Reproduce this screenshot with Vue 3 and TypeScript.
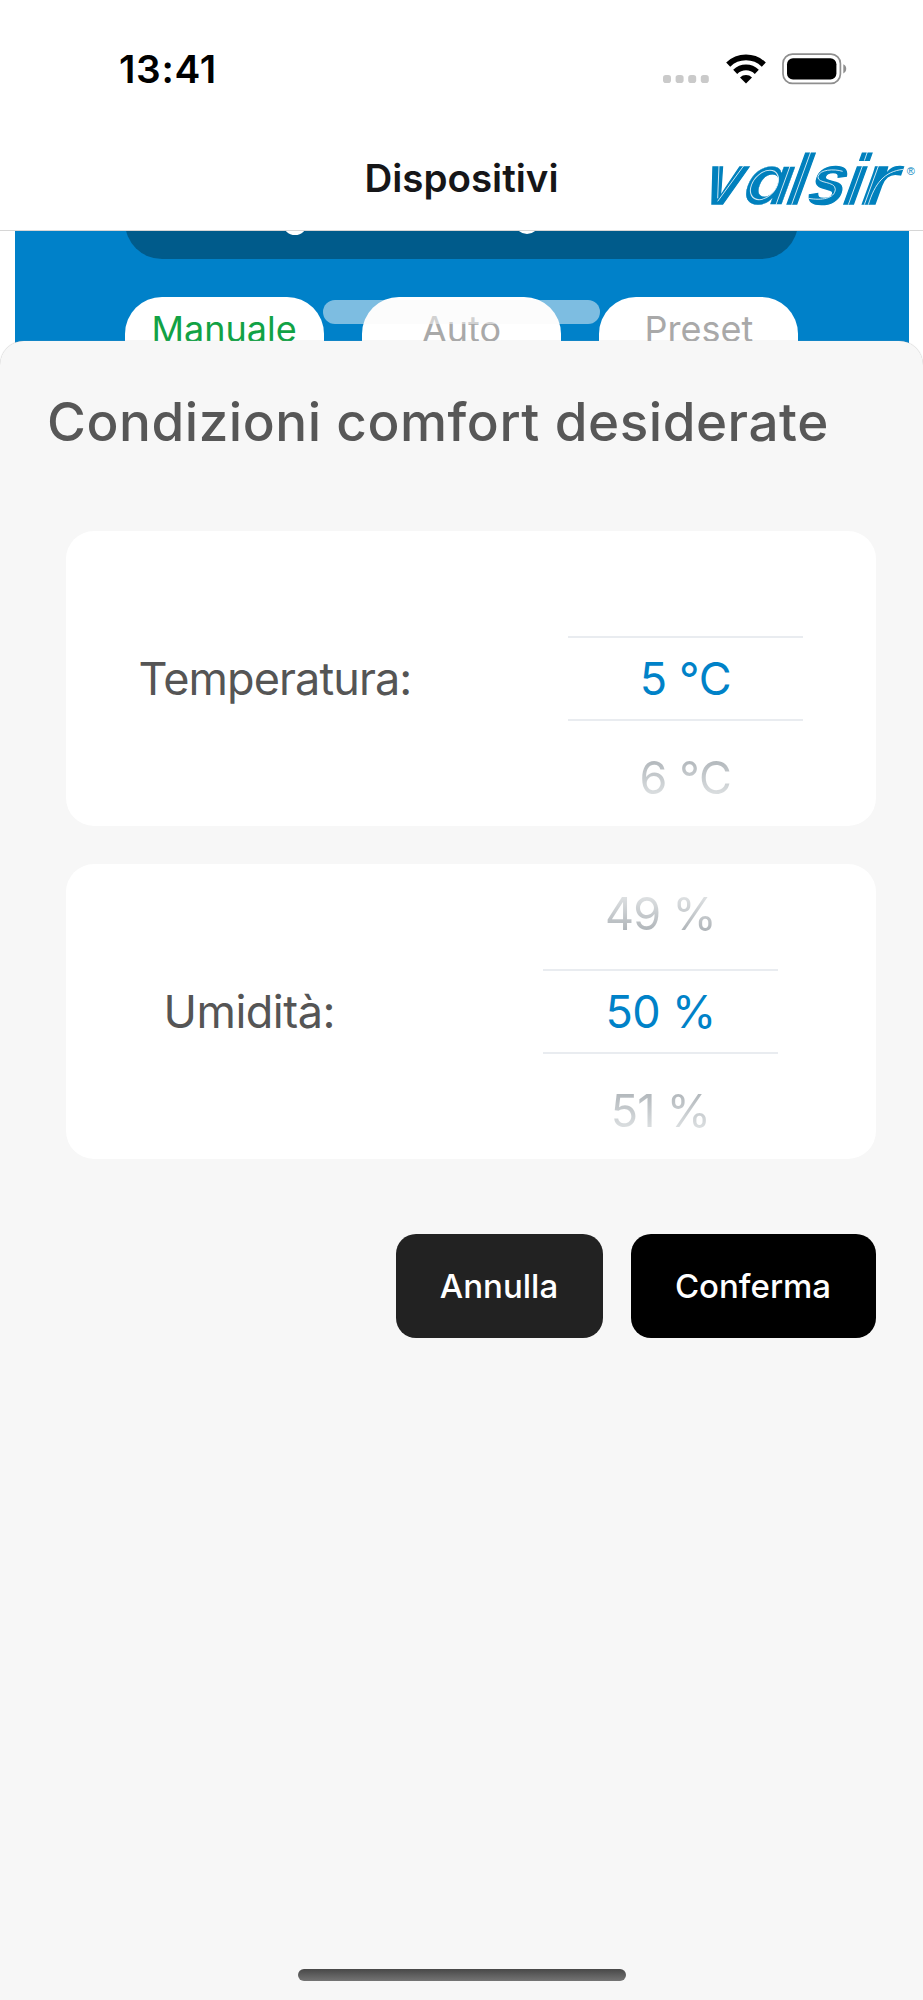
<script setup lang="ts">
interface Wheel {
  id: string
  label: string
  rows: [string, string, string]
}

const wheels: Wheel[] = [
  { id: 'temperature', label: 'Temperatura:', rows: ['', '5 °C', '6 °C'] },
  { id: 'humidity', label: 'Umidità:', rows: ['49 %', '50 %', '51 %'] },
]

const modes = [
  { id: 'manual', label: 'Manuale', active: true },
  { id: 'auto', label: 'Auto', active: false },
  { id: 'preset', label: 'Preset', active: false },
]
</script>

<template>
  <div class="screen">
    <header class="top">
      <div class="status">
        <span class="clock">13:41</span>
        <div class="indicators">
          <svg class="dots" width="46" height="8" viewBox="0 0 46 8">
            <rect v-for="n in 4" :key="n" :x="(n - 1) * 12.6" width="8" height="8" rx="2.8" fill="#cacaca" />
          </svg>
          <svg class="wifi" width="40" height="30" viewBox="0 0 40 30">
            <g fill="none" stroke="#000" stroke-width="5.8">
              <path d="M2.2 10.6A25.6 25.6 0 0 1 37.8 10.6" />
              <path d="M9.2 17.8A15.6 15.6 0 0 1 30.8 17.8" />
            </g>
            <path d="M20 29.4L14 23.4A8.6 8.6 0 0 1 26 23.4Z" />
          </svg>
          <svg class="battery" width="65" height="32" viewBox="0 0 65 32">
            <rect x="1" y="1.2" width="57.4" height="29.2" rx="9.4" fill="none" stroke="#8f8f8f" stroke-width="1.7" />
            <rect x="5" y="5.2" width="49.4" height="21.2" rx="6" />
            <path d="M61.3 11.2C65.2 12.6 65.2 19 61.3 20.4Z" fill="#8f8f8f" />
          </svg>
        </div>
      </div>
      <div class="nav">
        <h1 class="title">Dispositivi</h1>
        <svg class="logo" width="210" height="60" viewBox="54 54 630 180">
          <g class="wordmark" transform="translate(0 221) skewX(-20)">
            <text x="28" textLength="110" lengthAdjust="spacingAndGlyphs">v</text>
            <text class="round" x="145" textLength="144" lengthAdjust="spacingAndGlyphs">a</text>
            <text x="277">l</text>
            <text x="341" textLength="108" lengthAdjust="spacingAndGlyphs">s</text>
            <text x="447">i</text>
            <text x="499" textLength="105" lengthAdjust="spacingAndGlyphs">r</text>
          </g>
          <g fill="none" stroke="#fff" stroke-width="3" stroke-opacity="0.8">
            <path d="M87 106L83 205M162 106L83 214" />
            <ellipse cx="203" cy="-56" rx="39" ry="44" transform="translate(0 221) skewX(-20)" />
            <path d="M301 106L258 224M362 66L305 224" />
            <path d="M458 124C432 116 388 118 384 140C381 162 436 152 436 178C434 206 394 212 356 205" />
            <path d="M518 106L475 224M532 66L523 92M566 106L523 224M535 224C554 162 582 124 640 118" />
          </g>
          <text class="registered" x="650" y="136">®</text>
        </svg>
      </div>
    </header>

    <section class="backdrop">
      <div class="panel">
        <div class="readout">
          <i class="descender first"></i>
          <i class="descender second"></i>
        </div>
        <div class="modes">
          <div v-for="m in modes" :key="m.id" class="mode" :class="{ active: m.active }">{{ m.label }}</div>
        </div>
        <i class="grabber"></i>
      </div>
    </section>

    <main class="sheet">
      <h2 class="heading">Condizioni comfort desiderate</h2>
      <div class="cards">
        <div v-for="w in wheels" :key="w.id" class="card" :class="w.id">
          <span class="label">{{ w.label }}</span>
          <div class="wheel">
            <div class="row previous"><span>{{ w.rows[0] }}</span></div>
            <div class="row current"><span>{{ w.rows[1] }}</span></div>
            <div class="row next"><span>{{ w.rows[2] }}</span></div>
          </div>
        </div>
      </div>
      <div class="actions">
        <button class="button cancel">Annulla</button>
        <button class="button confirm">Conferma</button>
      </div>
      <i class="home"></i>
    </main>
  </div>
</template>

<style>
body {
  background: #fff;
}
</style>

<style scoped>
.screen {
  display: flex;
  flex-direction: column;
  width: 923px;
  height: 2000px;
  overflow: hidden;
  background: #fff;
  font-family: Inter, "Liberation Sans", sans-serif;
}
.top {
  box-sizing: border-box;
  height: 231px;
  border-bottom: 1px solid #d6d6d6;
}
.status {
  display: flex;
  justify-content: space-between;
  height: 128px;
  padding: 0 76px 0 119px;
}
.clock {
  margin-top: 46px;
  font-size: 38.8px;
  font-weight: 600;
  letter-spacing: 0.7px;
  line-height: 46px;
}
.indicators {
  display: flex;
  align-items: flex-start;
}
.dots {
  margin: 75px 17px 0 0;
}
.wifi {
  margin: 54px 16.5px 0 0;
}
.battery {
  margin-top: 52.5px;
}
.nav {
  display: grid;
  grid-template-columns: 1fr auto 1fr;
  align-items: start;
}
.title {
  grid-column: 2;
  margin: 27px 0 0;
  color: #161618;
  font-size: 38.5px;
  font-weight: 580;
  line-height: 46px;
}
.logo {
  justify-self: end;
  margin: 20px 5px 0 0;
  overflow: visible;
}
.wordmark {
  fill: #0080bd;
  stroke: #0080bd;
  stroke-width: 4px;
  font-family: "Liberation Sans", Arial, sans-serif;
  font-size: 210px;
  font-weight: 700;
}
.round {
  stroke-width: 1px;
  font-family: Inter, sans-serif;
  font-size: 204px;
  font-feature-settings: "cv11";
}
.registered {
  fill: #0080bd;
  font-family: "Liberation Sans", Arial, sans-serif;
  font-size: 33px;
}
.backdrop {
  height: 109.5px;
  padding: 0 14.5px;
}
.panel {
  position: relative;
  height: 134px;
  overflow: hidden;
  background: #0081c9;
}
.readout {
  position: relative;
  height: 28px;
  margin: 0 110.5px;
  overflow: hidden;
}
.readout::before {
  content: "";
  display: block;
  height: 110px;
  margin-top: -82px;
  border-radius: 37px;
  background: #005b8b;
}
.descender {
  position: absolute;
  top: -19px;
  width: 24px;
  height: 23px;
  border-radius: 50%;
  background: #fff;
}
.first {
  left: 158px;
}
.second {
  left: 390px;
  top: -20px;
}
.modes {
  display: grid;
  grid-template-columns: repeat(3, 1fr);
  gap: 38px;
  margin: 37.5px 110px 0;
}
.mode {
  height: 90px;
  border-radius: 37px;
  background: #fff;
  color: #a9a9a9;
  font-size: 36px;
  line-height: 65px;
  text-align: center;
}
.mode.active {
  color: #12a245;
}
.grabber {
  position: absolute;
  top: 69px;
  left: 308.5px;
  width: 277px;
  height: 24px;
  border-radius: 12px;
  background: rgba(250, 250, 250, 0.5);
}
.sheet {
  position: relative;
  display: flex;
  flex: 1;
  flex-direction: column;
  border-radius: 24px 24px 0 0;
  background: #f7f7f7;
  box-shadow: 0 0 1px #aaa;
}
.heading {
  height: 64px;
  margin: 49.5px 0 0 47px;
  color: #575757;
  font-size: 53px;
  font-weight: 500;
  letter-spacing: 0.55px;
  line-height: 64px;
  white-space: nowrap;
}
.cards {
  display: flex;
  flex-direction: column;
  gap: 37.4px;
  margin: 76.5px 47.5px 0 65.5px;
}
.card {
  display: flex;
  align-items: center;
  justify-content: space-between;
  height: 295.8px;
  border-radius: 28px;
  background: #fff;
}
.temperature {
  padding: 0 72.5px 0 73px;
}
.humidity {
  padding: 0 97.5px 0 98px;
}
.label {
  color: #555;
  font-size: 45px;
  letter-spacing: -0.9px;
}
.humidity .label {
  letter-spacing: -0.5px;
}
.wheel {
  position: relative;
  width: 235px;
}
.wheel::after {
  content: "";
  position: absolute;
  inset: 105.6px 0;
  border: solid #e9ecf0;
  border-width: 2.6px 0;
}
.row {
  height: 98.6px;
  font-size: 45px;
  line-height: 100.6px;
  text-align: center;
}
.humidity .row {
  letter-spacing: -0.7px;
}
.temperature .row {
  letter-spacing: -0.3px;
}
.current {
  color: #0082c8;
}
.previous span,
.next span {
  background: linear-gradient(#a6acb1, #e7eaeb);
  background-clip: text;
  -webkit-background-clip: text;
  color: transparent;
}
.previous span {
  background-image: linear-gradient(#eceeef, #a2a8ad);
}
.actions {
  display: flex;
  gap: 28px;
  justify-content: flex-end;
  margin: 75px 47.5px 0 0;
}
.button {
  width: 245px;
  height: 103.4px;
  padding: 0;
  border: 0;
  border-radius: 20px;
  background: #000;
  color: #fff;
  font-family: inherit;
  font-size: 33px;
  font-weight: 500;
}
.cancel {
  width: 207px;
  background: #222;
}
.home {
  position: absolute;
  bottom: 19px;
  left: 297.5px;
  width: 328.5px;
  height: 12px;
  border-radius: 6px;
  background: linear-gradient(#484848, #747474);
}
</style>
